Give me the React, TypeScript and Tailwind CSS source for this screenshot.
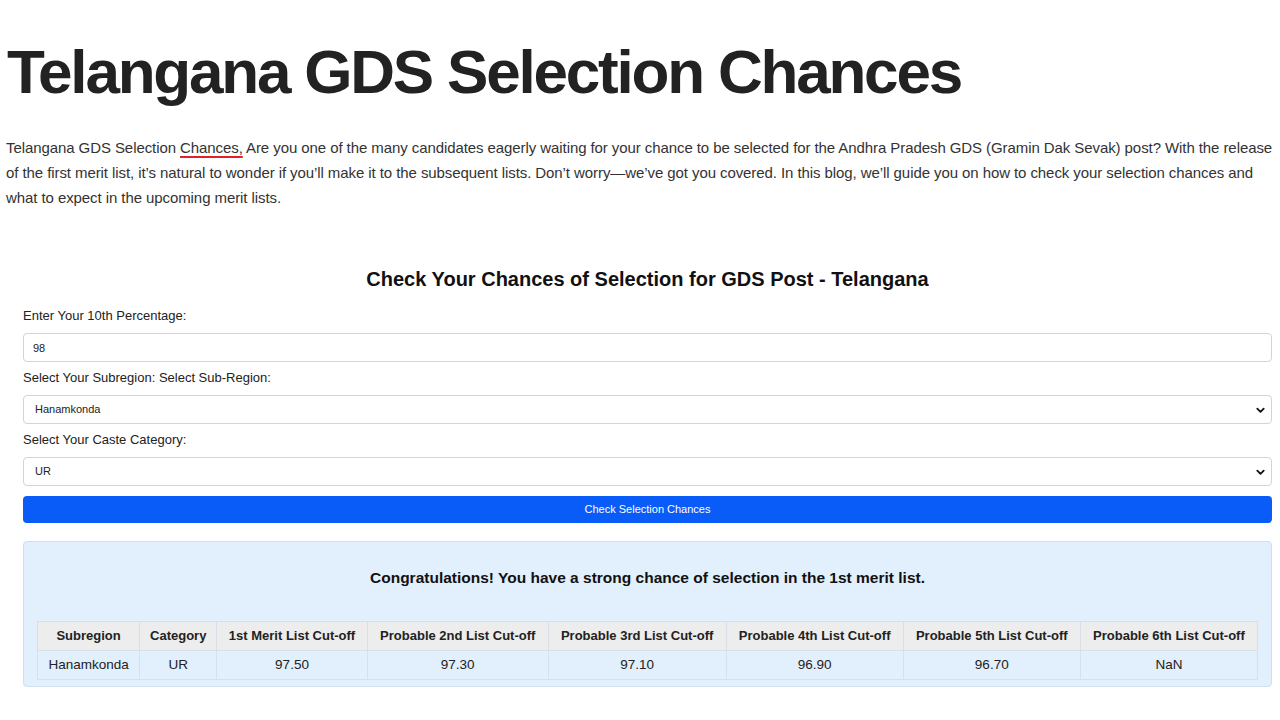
import { useState } from 'react';

const cols = [
  'Subregion',
  'Category',
  '1st Merit List Cut-off',
  'Probable 2nd List Cut-off',
  'Probable 3rd List Cut-off',
  'Probable 4th List Cut-off',
  'Probable 5th List Cut-off',
  'Probable 6th List Cut-off',
];

const row = ['Hanamkonda', 'UR', '97.50', '97.30', '97.10', '96.90', '96.70', 'NaN'];

function Chevron() {
  return (
    <svg className="pointer-events-none absolute right-[6px] top-1/2 -translate-y-1/2" width="11" height="11" viewBox="0 0 12 12">
      <path d="M2.5 4.5 6 8l3.5-3.5" fill="none" stroke="#111" strokeWidth="2" strokeLinecap="round" strokeLinejoin="round" />
    </svg>
  );
}

export default function App() {
  const [pct, setPct] = useState('98');

  return (
    <div className="min-h-screen w-[1280px] overflow-hidden bg-white font-['Liberation_Sans',Arial,sans-serif] text-[#333]">
      <h1 className="pl-[7px] pt-[36px] text-[62px] font-bold leading-[72px] tracking-[-2.2px] text-[#222]">
        Telangana GDS Selection Chances
      </h1>

      <p className="mt-[27px] w-[1284px] pl-[6px] text-[15px] leading-[25px] tracking-[-0.08px] text-[#333]">
        Telangana GDS Selection{' '}
        <a className="underline decoration-[#e0202a] decoration-[1.5px] underline-offset-[3px]">Chances,</a>{' '}
        Are you one of the many candidates eagerly waiting for your chance to be selected for the Andhra Pradesh GDS (Gramin Dak Sevak) post? With the release of the first merit list, it’s natural to wonder if you’ll make it to the subsequent lists. Don’t worry—we’ve got you covered. In this blog, we’ll guide you on how to check your selection chances and what to expect in the upcoming merit lists.
      </p>

      <section className="mt-[56px] pl-[23px] pr-[8px]">
        <h2 className="text-center text-[20px] font-bold leading-[26px] text-[#111]">
          Check Your Chances of Selection for GDS Post - Telangana
        </h2>

        <div className="mt-[16px] flex flex-col">
          <label className="text-[13px] leading-[16px] text-[#222]">Enter Your 10th Percentage:</label>
          <input
            value={pct}
            onChange={(e) => setPct(e.target.value)}
            className="mt-[9px] h-[29px] w-full rounded-[4px] border border-[#d4d4d4] bg-white px-[9px] text-[11px] text-[#222] outline-none"
          />

          <label className="mt-[8px] text-[13px] leading-[16px] text-[#222]">Select Your Subregion: Select Sub-Region:</label>
          <div className="relative mt-[9px]">
            <select className="h-[29px] w-full appearance-none rounded-[4px] border border-[#d4d4d4] bg-white px-[11px] text-[11px] text-[#222] outline-none">
              <option>Hanamkonda</option>
            </select>
            <Chevron />
          </div>

          <label className="mt-[8px] text-[13px] leading-[16px] text-[#222]">Select Your Caste Category:</label>
          <div className="relative mt-[9px]">
            <select className="h-[29px] w-full appearance-none rounded-[4px] border border-[#d4d4d4] bg-white px-[11px] text-[11px] text-[#222] outline-none">
              <option>UR</option>
            </select>
            <Chevron />
          </div>

          <button className="mt-[10px] h-[27px] w-full rounded-[4px] bg-[#0a5cf8] text-[11px] text-white">
            Check Selection Chances
          </button>
        </div>

        <div className="mt-[18px] rounded-[4px] border border-[#cfdfee] bg-[#e2effc] px-[13px] pb-[6px] pt-[26px]">
          <p className="text-center text-[15.5px] font-bold leading-[20px] text-[#111]">
            Congratulations! You have a strong chance of selection in the 1st merit list.
          </p>
          <table className="mt-[33px] w-full border-collapse text-center text-[13.5px] text-[#222]">
            <thead>
              <tr className="bg-[#ededed]">
                {cols.map((c) => (
                  <th key={c} className="h-[29px] whitespace-nowrap border border-[#d8dfe6] px-[8px] text-[13px] font-bold">
                    {c}
                  </th>
                ))}
              </tr>
            </thead>
            <tbody>
              <tr>
                {row.map((v, i) => (
                  <td key={i} className="h-[29px] border border-[#d8dfe6] px-[8px]">
                    {v}
                  </td>
                ))}
              </tr>
            </tbody>
          </table>
        </div>
      </section>
    </div>
  );
}
